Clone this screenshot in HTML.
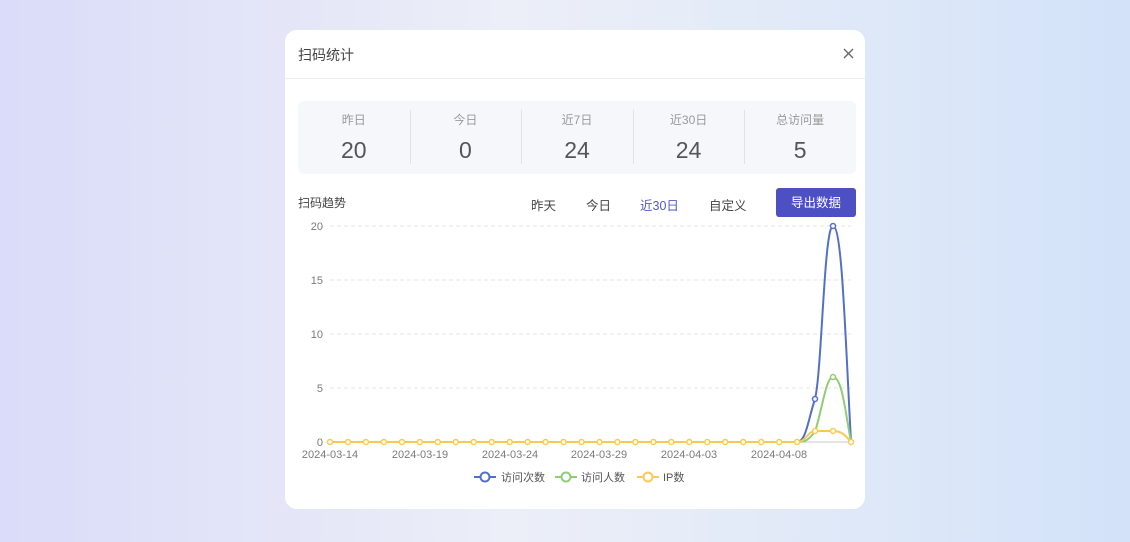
<!DOCTYPE html>
<html><head><meta charset="utf-8"><style>
*{margin:0;padding:0;box-sizing:border-box}
body{width:1130px;height:542px;overflow:hidden;font-family:"Liberation Sans","Noto Sans CJK SC",sans-serif;background:linear-gradient(90deg,#dadcf9 0%,#eceef8 45%,#e6ecf8 60%,#d3e2f9 100%);position:relative}
.modal{position:absolute;left:285px;top:30px;width:580px;height:479px;background:#fff;border-radius:12px}
.hd{height:49px;border-bottom:1px solid #eceef2;font-size:14px;color:#444;padding:15px 0 0 13px}
.s .v,.tabs span,.tt{color:#444}
.stats{position:absolute;left:13px;top:71px;width:558px;height:73px;background:#f5f7fa;border-radius:6px;display:flex}
.s{flex:1;text-align:center;position:relative}
.s+.s:before{content:"";position:absolute;left:0;top:9px;height:54px;border-left:1px solid #e0e2e6}
.s .l{font-size:12px;color:#999;margin-top:10px}
.s .v{font-size:23px;color:#555;margin-top:9px}
.tt{position:absolute;left:13px;top:164px;font-size:12px}
.tabs span{position:absolute;top:165px;font-size:12.5px;color:#444}
.btn{position:absolute;left:491px;top:158px;width:80px;height:29px;background:#4d50c2;color:#fff;border-radius:3px;font-size:12.5px;text-align:center;line-height:31px}
svg{position:absolute;left:0;top:0}
</style></head><body>
<div class="modal">
<div class="hd">扫码统计</div>
<div class="stats">
<div class="s"><div class="l">昨日</div><div class="v">20</div></div>
<div class="s"><div class="l">今日</div><div class="v">0</div></div>
<div class="s"><div class="l">近7日</div><div class="v">24</div></div>
<div class="s"><div class="l">近30日</div><div class="v">24</div></div>
<div class="s"><div class="l">总访问量</div><div class="v">5</div></div>
</div>
<div class="tt">扫码趋势</div>
<div class="tabs"><span style="left:246px">昨天</span><span style="left:301px">今日</span><span style="left:355px;color:#5457c9">近30日</span><span style="left:424px">自定义</span></div>
<div class="btn">导出数据</div>
</div>
<svg width="1130" height="542" font-family="Liberation Sans, Noto Sans CJK SC, sans-serif">
<path d="M844 49 L853 58 M853 49 L844 58" stroke="#666" stroke-width="1.3"/>
<g stroke="#e4e6ea" stroke-dasharray="4,3">
<line x1="330" y1="226" x2="851" y2="226"/><line x1="330" y1="280" x2="851" y2="280"/><line x1="330" y1="334" x2="851" y2="334"/><line x1="330" y1="388" x2="851" y2="388"/></g>
<line x1="330" y1="442" x2="851" y2="442" stroke="#c8c8c8"/>
<g font-size="11" fill="#7a7a7a" text-anchor="end"><text x="323" y="230">20</text><text x="323" y="284">15</text><text x="323" y="338">10</text><text x="323" y="392">5</text><text x="323" y="446">0</text></g>
<g font-size="11" fill="#7a7a7a" text-anchor="middle"><text x="330" y="458">2024-03-14</text><text x="420" y="458">2024-03-19</text><text x="510" y="458">2024-03-24</text><text x="599" y="458">2024-03-29</text><text x="689" y="458">2024-04-03</text><text x="779" y="458">2024-04-08</text></g>
<path d="M797 442 C806 442 808 420 815 399 C822 370 824 226 833 226 C842 226 845 330 851 442" fill="none" stroke="#5470c6" stroke-width="2"/>
<path d="M797 442 C806 442 808 440 815 432 C822 410 826 377 833 377 C842 377 845 410 851 442" fill="none" stroke="#91cc75" stroke-width="2"/>
<path d="M330 442 L797 442 C806 442 808 431 815 431 L833 431 C842 431 845 435 851 442" fill="none" stroke="#fac858" stroke-width="2"/>
<g fill="#fff" stroke="#5470c6" stroke-width="1.5"><circle cx="815" cy="399" r="2.5"/><circle cx="833" cy="226" r="2.5"/></g>
<circle cx="833" cy="377" r="2.5" fill="#fff" stroke="#91cc75" stroke-width="1.5"/>
<g fill="#fff" stroke="#fac858" stroke-width="1.5" id="pts"></g>
<g font-size="11" fill="#555">
<line x1="474" y1="477" x2="496" y2="477" stroke="#5470c6" stroke-width="2"/><circle cx="485" cy="477" r="4.5" fill="#fff" stroke="#5470c6" stroke-width="2"/><text x="501" y="481">访问次数</text>
<line x1="555" y1="477" x2="577" y2="477" stroke="#91cc75" stroke-width="2"/><circle cx="566" cy="477" r="4.5" fill="#fff" stroke="#91cc75" stroke-width="2"/><text x="581" y="481">访问人数</text>
<line x1="637" y1="477" x2="659" y2="477" stroke="#fac858" stroke-width="2"/><circle cx="648" cy="477" r="4.5" fill="#fff" stroke="#fac858" stroke-width="2"/><text x="663" y="481">IP数</text>
</g>
</svg>
<script>
var g=document.getElementById('pts'),s='';
for(var i=0;i<30;i++){var x=330+i*17.966,y=(i==27||i==28)?431:442;s+='<circle cx="'+x+'" cy="'+y+'" r="2.5"/>';}
g.innerHTML=s;
</script>
</body></html>
